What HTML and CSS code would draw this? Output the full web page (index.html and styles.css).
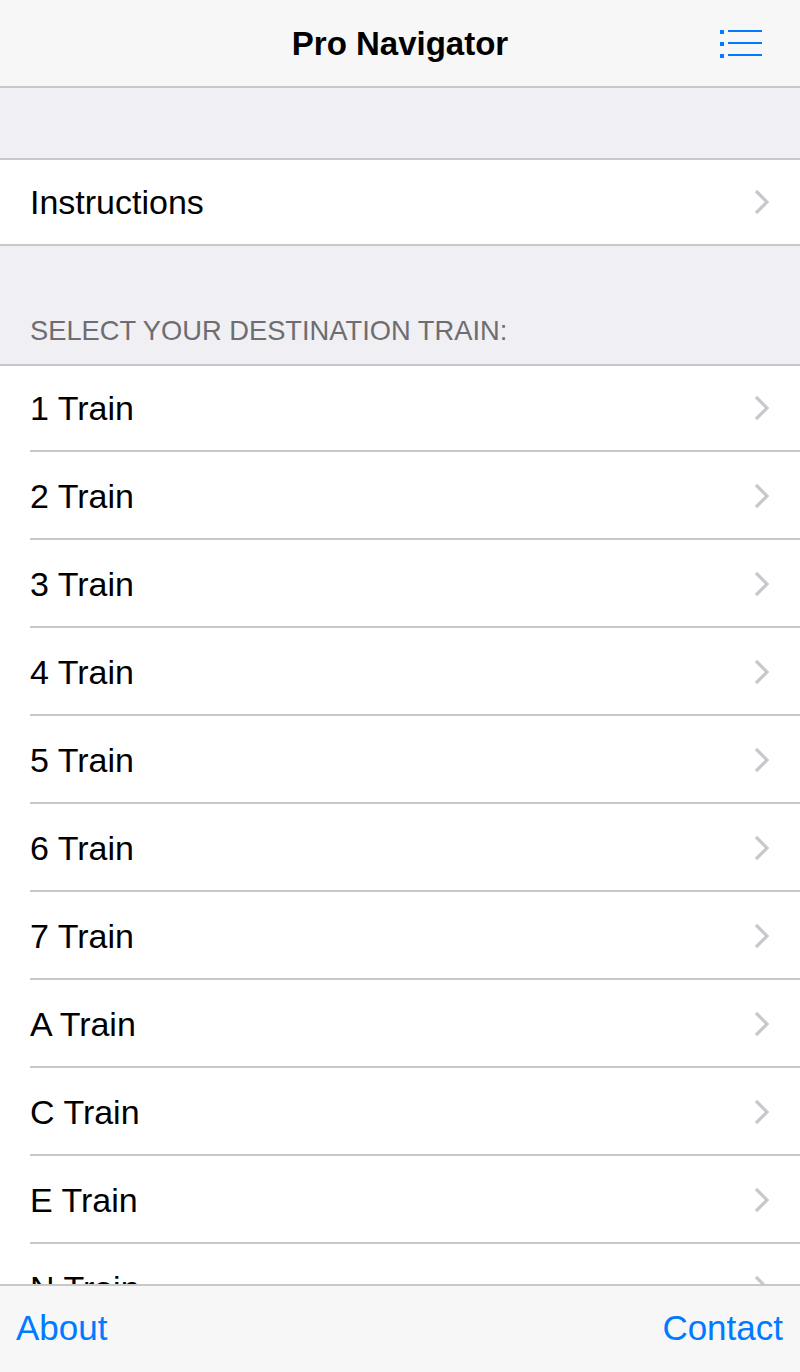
FILE: index.html
```html
<!DOCTYPE html>
<html>
<head>
<meta charset="utf-8">
<link rel="stylesheet" href="styles.css">
</head>
<body>
<div class="app">
  <header class="navbar">
    <h1 class="title">Pro Navigator</h1>
    <button class="menu-btn" aria-label="Menu">
      <svg width="44" height="30" viewBox="0 0 44 30">
        <rect x="0" y="0" width="4" height="4" fill="#007aff"/>
        <rect x="8" y="0" width="34" height="2" fill="#007aff"/>
        <rect x="0" y="12" width="4" height="4" fill="#007aff"/>
        <rect x="8" y="12" width="34" height="2" fill="#007aff"/>
        <rect x="0" y="24" width="4" height="4" fill="#007aff"/>
        <rect x="8" y="24" width="34" height="2" fill="#007aff"/>
      </svg>
    </button>
  </header>
  <main class="content">
    <div class="spacer"></div>
    <ul class="group">
      <li class="row"><span>Instructions</span><svg class="chev" width="16" height="26" viewBox="0 0 16 26"><polyline points="2,2 13,13 2,24" fill="none" stroke="#c7c7cc" stroke-width="3.2"/></svg></li>
    </ul>
    <div class="section-header">SELECT YOUR DESTINATION TRAIN:</div>
    <ul class="group list">
      <li class="row"><span>1 Train</span><svg class="chev" width="16" height="26" viewBox="0 0 16 26"><polyline points="2,2 13,13 2,24" fill="none" stroke="#c7c7cc" stroke-width="3.2"/></svg></li>
      <li class="row"><span>2 Train</span><svg class="chev" width="16" height="26" viewBox="0 0 16 26"><polyline points="2,2 13,13 2,24" fill="none" stroke="#c7c7cc" stroke-width="3.2"/></svg></li>
      <li class="row"><span>3 Train</span><svg class="chev" width="16" height="26" viewBox="0 0 16 26"><polyline points="2,2 13,13 2,24" fill="none" stroke="#c7c7cc" stroke-width="3.2"/></svg></li>
      <li class="row"><span>4 Train</span><svg class="chev" width="16" height="26" viewBox="0 0 16 26"><polyline points="2,2 13,13 2,24" fill="none" stroke="#c7c7cc" stroke-width="3.2"/></svg></li>
      <li class="row"><span>5 Train</span><svg class="chev" width="16" height="26" viewBox="0 0 16 26"><polyline points="2,2 13,13 2,24" fill="none" stroke="#c7c7cc" stroke-width="3.2"/></svg></li>
      <li class="row"><span>6 Train</span><svg class="chev" width="16" height="26" viewBox="0 0 16 26"><polyline points="2,2 13,13 2,24" fill="none" stroke="#c7c7cc" stroke-width="3.2"/></svg></li>
      <li class="row"><span>7 Train</span><svg class="chev" width="16" height="26" viewBox="0 0 16 26"><polyline points="2,2 13,13 2,24" fill="none" stroke="#c7c7cc" stroke-width="3.2"/></svg></li>
      <li class="row"><span>A Train</span><svg class="chev" width="16" height="26" viewBox="0 0 16 26"><polyline points="2,2 13,13 2,24" fill="none" stroke="#c7c7cc" stroke-width="3.2"/></svg></li>
      <li class="row"><span>C Train</span><svg class="chev" width="16" height="26" viewBox="0 0 16 26"><polyline points="2,2 13,13 2,24" fill="none" stroke="#c7c7cc" stroke-width="3.2"/></svg></li>
      <li class="row"><span>E Train</span><svg class="chev" width="16" height="26" viewBox="0 0 16 26"><polyline points="2,2 13,13 2,24" fill="none" stroke="#c7c7cc" stroke-width="3.2"/></svg></li>
      <li class="row"><span>N Train</span><svg class="chev" width="16" height="26" viewBox="0 0 16 26"><polyline points="2,2 13,13 2,24" fill="none" stroke="#c7c7cc" stroke-width="3.2"/></svg></li>
      <li class="row"><span>Q Train</span><svg class="chev" width="16" height="26" viewBox="0 0 16 26"><polyline points="2,2 13,13 2,24" fill="none" stroke="#c7c7cc" stroke-width="3.2"/></svg></li>
    </ul>
  </main>
  <footer class="toolbar">
    <a class="tool-link">About</a>
    <a class="tool-link">Contact</a>
  </footer>
</div>
</body>
</html>
```

FILE: styles.css
```css
* { box-sizing: border-box; }
html, body {
  margin: 0;
  padding: 0;
  width: 800px;
  height: 1372px;
  overflow: hidden;
  font-family: "Liberation Sans", Arial, Helvetica, sans-serif;
  background: #efeff4;
}
.app {
  display: flex;
  flex-direction: column;
  height: 1372px;
}
.navbar {
  position: relative;
  flex: 0 0 88px;
  background: #f7f7f7;
  border-bottom: 2px solid #c8c7cc;
  display: flex;
  align-items: center;
  justify-content: center;
}
.title {
  margin: 0;
  font-size: 33px;
  font-weight: bold;
  color: #000;
  padding-top: 1px;
}
.menu-btn {
  position: absolute;
  right: 36px;
  top: 30px;
  padding: 0;
  border: 0;
  background: none;
  display: block;
  line-height: 0;
}
.content {
  flex: 1;
  overflow: hidden;
}
.spacer {
  height: 70px;
}
.group {
  list-style: none;
  margin: 0;
  padding: 0 0 0 30px;
  background: #fff;
  border-top: 2px solid #c8c7cc;
  border-bottom: 2px solid #c8c7cc;
}
.row {
  height: 84px;
  display: flex;
  align-items: center;
  justify-content: space-between;
  padding-right: 30px;
  font-size: 34px;
  color: #000;
}
.chev {
  display: block;
  flex: 0 0 auto;
}
.list .row {
  height: 88px;
  border-bottom: 2px solid #c8c7cc;
  padding-top: 2px;
}
.list .row:first-child {
  height: 86px;
  padding-top: 0;
}
.list .row:last-child { border-bottom: 0; }
.section-header {
  height: 118px;
  padding: 0 30px 17px;
  display: flex;
  align-items: flex-end;
  font-size: 27.3px;
  color: #6d6d72;
}
.toolbar {
  flex: 0 0 88px;
  background: #f7f7f7;
  border-top: 2px solid #c8c7cc;
  display: flex;
  align-items: center;
  justify-content: space-between;
  padding: 0 17px 2px 16px;
}
.tool-link {
  font-size: 35px;
  color: #007aff;
}
```
